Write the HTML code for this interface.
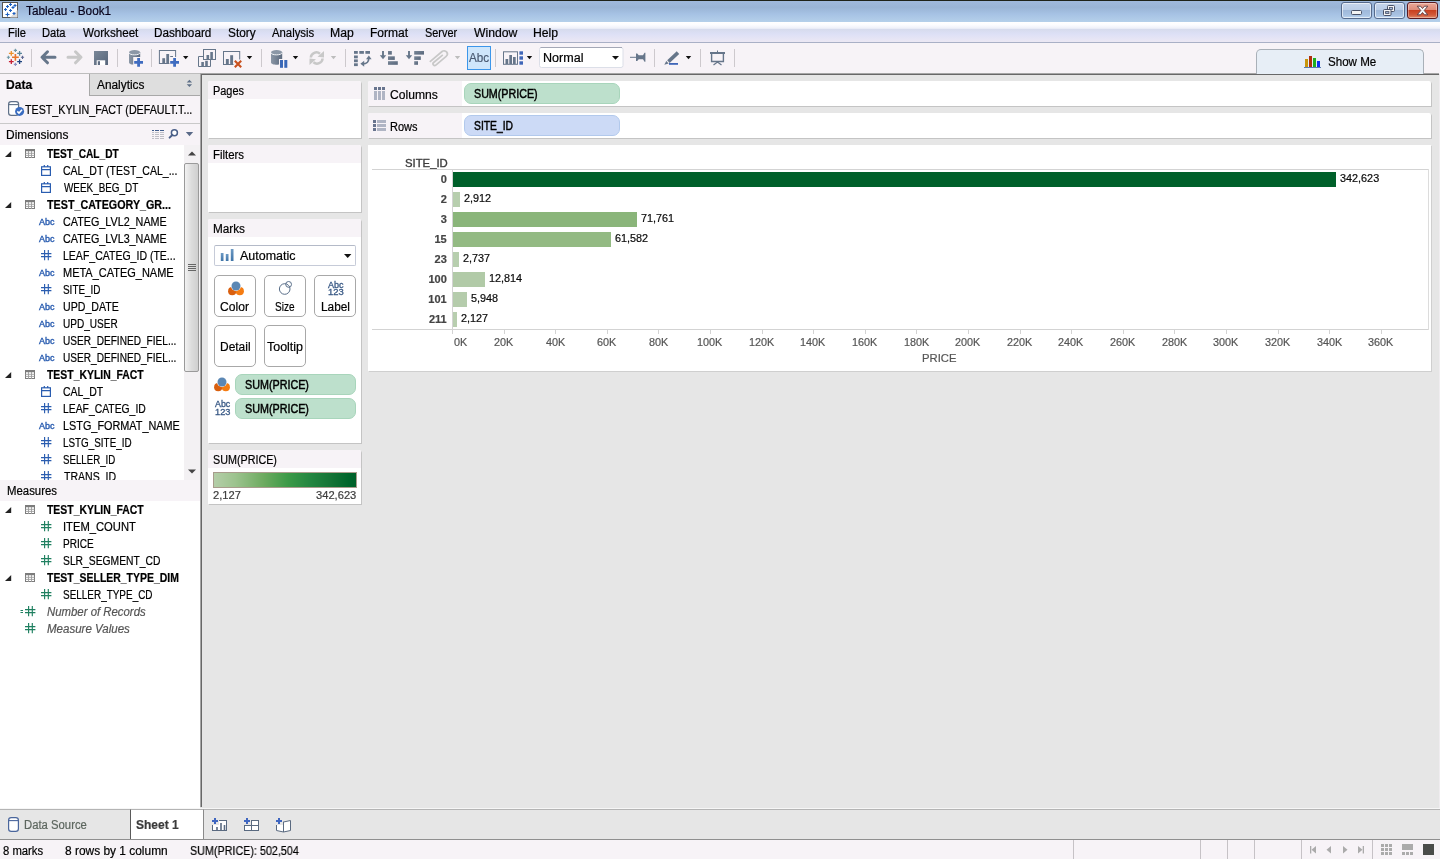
<!DOCTYPE html>
<html><head><meta charset="utf-8"><title>Tableau - Book1</title>
<style>
*{box-sizing:border-box;margin:0;padding:0}
html,body{width:1440px;height:859px;overflow:hidden;background:#e6e6e6}
body{position:relative;font-family:"Liberation Sans",sans-serif;font-size:12px;color:#000}
.a{position:absolute}
svg{position:absolute;overflow:visible}
.t{position:absolute;white-space:nowrap;transform-origin:0 0;-webkit-text-stroke:.2px}
#title{left:0;top:0;width:1440px;height:22px;background:linear-gradient(#9fb9dc 0,#99b4d5 30%,#a6c2e4 62%,#b5d0ea 100%);border-top:1px solid #1e2218}
#menu{left:0;top:22px;width:1440px;height:21px;background:linear-gradient(#fff 0,#fcfcff 14%,#eef0f9 32%,#d6dbed 35%,#dde0f6 60%,#e6e5f5 85%,#ece8f4 100%);border-bottom:1px solid #a9b0c6}
#tool{left:0;top:43px;width:1440px;height:31px;background:#f7f3f7}
.sep{position:absolute;width:1px;background:#cdc9cd;top:49px;height:18px}
.hdr{background:#f7f3f7}
.card{position:absolute;background:#fff;box-shadow:1px 1px 0 #c4c4c4;border-radius:2px 2px 0 0;overflow:hidden}
.card .h{position:absolute;left:0;top:0;right:0;background:#f7f3f7}
.pill{position:absolute;border-radius:7px;height:21px}
.g{background:#bde0cc;border:1px solid #a8d5bb}
.b{background:#ccdaf6;border:1px solid #b2c9ec}
.btn{position:absolute;width:42px;height:42px;border:1px solid #a8a8a8;border-radius:5px;background:#fff}
.bar{position:absolute;left:453px;height:15px}
.ln{position:absolute;background:#d3d3d3}
#root{position:absolute;left:0;top:0;width:1440px;height:859px;overflow:hidden;will-change:transform}
</style></head><body><div id="root">

<div id="title" class="a"></div>
<svg style="left:2px;top:2px" width="17" height="17" viewBox="0 0 17 17"><rect x=".5" y=".5" width="15" height="15" fill="#fff" stroke="#555"/><path d="M8 15.500L15.500 8V15.500Z" fill="#ddd"/>
<g stroke="#1c5fc0" stroke-width="1.100"><path d="M4 4.500h3M5.500 3v3"/><path d="M7 2.500h3M8.500 1v3"/><path d="M11.500 3.500h3M13 2v3"/><path d="M7 8.500h3M8.500 7v3"/><path d="M9.500 5.500h3M11 4v3"/><path d="M2 7.500h3M3.500 6v3"/><path d="M3.500 12.500h4M5.500 10.500v4"/><path d="M10.500 11.500h3M12 10v3"/></g></svg>
<div class="t" style="left:26.44px;top:2.84px;font-size:12px;line-height:16px;transform:scaleX(0.9817);color:#08041c;">Tableau - Book1</div>
<div class="a" style="left:1341px;top:2px;width:31px;height:17px;border:1px solid #566a8c;border-radius:3px;box-shadow:inset 0 0 0 1px rgba(255,255,255,.6);background:linear-gradient(#c6d6ec 0,#b9cce6 47%,#a0b9da 50%,#a8c2e2 80%,#bcd4f0 100%)"></div>
<div class="a" style="left:1351px;top:10px;width:11px;height:5px;background:#f4f4f4;border:1px solid #4a5268;border-radius:1.500px"></div>
<div class="a" style="left:1374px;top:2px;width:31px;height:17px;border:1px solid #566a8c;border-radius:3px;box-shadow:inset 0 0 0 1px rgba(255,255,255,.6);background:linear-gradient(#c6d6ec 0,#b9cce6 47%,#a0b9da 50%,#a8c2e2 80%,#bcd4f0 100%)"></div>
<svg style="left:1383px;top:5px" width="13" height="11" viewBox="0 0 13 11"><rect x="4.500" y=".5" width="7" height="6" rx="1" fill="#f4f4f4" stroke="#4a5268"/><rect x="6.500" y="2.500" width="3" height="2" fill="#a9c0e0" stroke="#4a5268" stroke-width=".8"/><rect x=".5" y="4.500" width="7.500" height="6" rx="1" fill="#f4f4f4" stroke="#4a5268"/><rect x="2.600" y="6.600" width="3.300" height="1.800" fill="#a9c0e0" stroke="#4a5268" stroke-width=".9"/></svg>
<div class="a" style="left:1407px;top:2px;width:31px;height:17px;border:1px solid #5a1a20;border-radius:3px;background:linear-gradient(#eaa898 0,#dd8a78 47%,#c9401f 50%,#d25a3a 80%,#e08a68 100%);box-shadow:inset 0 0 0 1px rgba(255,255,255,.35)"></div>
<svg style="left:1416px;top:5px" width="13" height="11" viewBox="0 0 13 11"><path d="M1.200 1.200h3.400l1.900 2.300 1.900-2.300h3.400l-3.600 4.300 3.600 4.300h-3.400l-1.900-2.300-1.900 2.300h-3.400l3.600-4.300z" fill="#f6f6f6" stroke="#5a3a40" stroke-width=".9" stroke-linejoin="round"/></svg>
<div id="menu" class="a"></div>
<div class="t" style="left:8.18px;top:24.84px;font-size:12px;line-height:16px;transform:scaleX(0.9316);">File</div>
<div class="t" style="left:42.39px;top:24.84px;font-size:12px;line-height:16px;transform:scaleX(0.9276);">Data</div>
<div class="t" style="left:83.05px;top:24.84px;font-size:12px;line-height:16px;transform:scaleX(0.9685);">Worksheet</div>
<div class="t" style="left:154.14px;top:24.84px;font-size:12px;line-height:16px;transform:scaleX(0.9763);">Dashboard</div>
<div class="t" style="left:227.76px;top:24.84px;font-size:12px;line-height:16px;transform:scaleX(0.9840);">Story</div>
<div class="t" style="left:271.78px;top:24.84px;font-size:12px;line-height:16px;transform:scaleX(0.9451);">Analysis</div>
<div class="t" style="left:330.40px;top:24.84px;font-size:12px;line-height:16px;transform:scaleX(1.0158);">Map</div>
<div class="t" style="left:370.11px;top:24.84px;font-size:12px;line-height:16px;transform:scaleX(1.0019);">Format</div>
<div class="t" style="left:425.11px;top:24.84px;font-size:12px;line-height:16px;transform:scaleX(0.9075);">Server</div>
<div class="t" style="left:473.55px;top:24.84px;font-size:12px;line-height:16px;transform:scaleX(1.0174);">Window</div>
<div class="t" style="left:533.00px;top:24.84px;font-size:12px;line-height:16px;transform:scaleX(1.0176);">Help</div>
<div id="tool" class="a"></div>
<div class="a" style="left:200px;top:73px;width:1239px;height:1px;background:#a6a6a6"></div><div class="a" style="left:201px;top:74px;width:1238px;height:1px;background:#686868"></div>
<div class="a" style="left:0;top:73px;width:200px;height:1px;background:#bdbdbd"></div>
<div class="sep" style="left:31px"></div>
<div class="sep" style="left:117px"></div>
<div class="sep" style="left:151px"></div>
<div class="sep" style="left:261px"></div>
<div class="sep" style="left:345px"></div>
<div class="sep" style="left:495px"></div>
<div class="sep" style="left:654px"></div>
<div class="sep" style="left:700px"></div>
<div class="sep" style="left:734px"></div>
<svg style="left:0;top:44px" width="760" height="30" viewBox="0 44 760 30"><defs><linearGradient id="ig" x1="0" y1="0" x2="1" y2="1"><stop offset="0" stop-color="#7a8798"/><stop offset="1" stop-color="#56657a"/></linearGradient><linearGradient id="cy" x1="0" y1="0" x2="1" y2="0"><stop offset="0" stop-color="#8b97a6"/><stop offset="1" stop-color="#5c6a7e"/></linearGradient></defs><path d="M12.0 57.3h6.8M15.4 53.9v6.8" stroke="#e8762c" stroke-width="1.6" fill="none"/><path d="M8.9 53.3h4.8M11.3 50.9v4.8" stroke="#eb912c" stroke-width="1.3" fill="none"/><path d="M17.200000000000003 53.3h4.8M19.6 50.9v4.8" stroke="#59879b" stroke-width="1.3" fill="none"/><path d="M8.9 61.7h4.8M11.3 59.300000000000004v4.8" stroke="#c72035" stroke-width="1.3" fill="none"/><path d="M17.200000000000003 61.7h4.8M19.6 59.300000000000004v4.8" stroke="#1f447e" stroke-width="1.3" fill="none"/><path d="M13.8 50.4h3.2M15.4 48.8v3.2" stroke="#7199a6" stroke-width="1.1" fill="none"/><path d="M13.8 64.4h3.2M15.4 62.800000000000004v3.2" stroke="#8c8fc0" stroke-width="1.1" fill="none"/><path d="M6.800000000000001 57.3h3.2M8.4 55.699999999999996v3.2" stroke="#7199a6" stroke-width="1.1" fill="none"/><path d="M20.9 57.3h3.2M22.5 55.699999999999996v3.2" stroke="#5c6691" stroke-width="1.1" fill="none"/><path d="M47.500 51.800L42 57.300l5.500 5.500M42.300 57.300H55" stroke="#66768a" stroke-width="3" fill="none" stroke-linecap="round" stroke-linejoin="round"/><path d="M75.500 51.800L81 57.300l-5.500 5.500M80.700 57.300H68" stroke="#c8c8c8" stroke-width="3" fill="none" stroke-linecap="round" stroke-linejoin="round"/><rect x="94" y="51" width="14" height="14" fill="url(#ig)"/><rect x="96.700" y="60.300" width="8.500" height="4.700" fill="#fff"/><rect x="97.800" y="61.200" width="2.200" height="3.800" fill="#5f6d82"/><path d="M129 52.2v10.4c0 3 11.2 3 11.2 0v-10.4z" fill="url(#cy)"/><ellipse cx="134.6" cy="52.3" rx="5.6" ry="2.300" fill="#8b97a6"/><path d="M129 52.6c0 3 11.2 3 11.2 0" stroke="#fff" stroke-width=".9" fill="none"/><rect x="133.200" y="57" width="10.800" height="10.800" fill="#f7f3f7"/><path d="M134.2 62.4h8.800M138.6 58.0v8.800" stroke="#3f6cc0" stroke-width="2.800" fill="none"/><rect x="159.400" y="50.500" width="16.200" height="13" fill="none" stroke="#66768a"/><rect x="162.300" y="58.200" width="2.800" height="5" fill="#66768a"/><rect x="166.300" y="54" width="2.800" height="9.200" fill="#66768a"/><rect x="170.200" y="56" width="2.800" height="3" fill="#66768a"/><rect x="169.400" y="57" width="10.600" height="10.600" fill="#f7f3f7"/><path d="M170.2 62.4h8.800M174.6 58.0v8.800" stroke="#3f6cc0" stroke-width="2.800" fill="none"/><path d="M183 56h5.400l-2.700 3.200z" fill="#111"/><rect x="203.500" y="49.500" width="12" height="10" fill="#f7f3f7" stroke="#66768a"/><rect x="206.500" y="55" width="2.600" height="4" fill="#66768a"/><rect x="210.300" y="52" width="2.600" height="7" fill="#66768a"/><path d="M203 56.500h-4.500v10h12v-6.500" fill="none" stroke="#66768a"/><rect x="201.300" y="62" width="2.600" height="4" fill="#66768a"/><rect x="205.200" y="60.800" width="2.600" height="5.200" fill="#66768a"/><rect x="223.500" y="51.500" width="16.200" height="13" fill="none" stroke="#66768a"/><rect x="225.900" y="59" width="2.900" height="5" fill="#66768a"/><rect x="230.200" y="55.200" width="2.900" height="8.800" fill="#66768a"/><rect x="233.500" y="59.500" width="9" height="9" fill="#f7f3f7"/><path d="M234.800 60.800l6.400 6.400M241.200 60.800l-6.400 6.400" stroke="#c8501e" stroke-width="2.100" fill="none"/><path d="M246.8 56h5.400l-2.700 3.200z" fill="#111"/><path d="M271 52.2v10.4c0 3 11.2 3 11.2 0v-10.4z" fill="url(#cy)"/><ellipse cx="276.6" cy="52.3" rx="5.6" ry="2.300" fill="#8b97a6"/><path d="M271 52.6c0 3 11.2 3 11.2 0" stroke="#fff" stroke-width=".9" fill="none"/><rect x="279" y="59" width="9" height="9" fill="#f7f3f7"/><rect x="280" y="60" width="3" height="7.800" fill="#3a68b8"/><rect x="284.300" y="60" width="3" height="7.800" fill="#3a68b8"/><path d="M292.8 56h5.400l-2.700 3.200z" fill="#111"/><path d="M310.800 57.500a5.600 5.600 0 0 1 9.200-3.800" stroke="#c8c8c8" stroke-width="2.500" fill="none"/><path d="M317.500 56.800l6.500-5.800 0 6.600z" fill="#c8c8c8"/><path d="M322.600 58.500a5.600 5.600 0 0 1-9.200 3.800" stroke="#c8c8c8" stroke-width="2.500" fill="none"/><path d="M316 59.200l-6.500 5.800 0-6.600z" fill="#c8c8c8"/><path d="M330.8 56h5.400l-2.700 3.200z" fill="#bdbdbd"/><rect x="354" y="51" width="3.8" height="2.800" fill="#66768a"/><rect x="359.3" y="51" width="4.6" height="2.800" fill="#66768a"/><rect x="365.4" y="51" width="4.6" height="2.800" fill="#66768a"/><rect x="354" y="55.5" width="3.800" height="2.800" fill="#66768a"/><rect x="354" y="59.4" width="3.800" height="2.800" fill="#66768a"/><rect x="354" y="63.3" width="3.800" height="2.800" fill="#66768a"/><path d="M362.500 63.800c5 0 6.300-2 6.300-6" stroke="#66768a" stroke-width="1.700" fill="none"/><path d="M366 59.200l2.800-3.600 2.800 3.600z" fill="#66768a"/><path d="M364.200 60.800l-3.800 3 3.800 3z" fill="#66768a"/><path d="M383 51v5.500" stroke="#66768a" stroke-width="1.900" fill="none"/><path d="M379.8 55.200h6.400l-3.200 4z" fill="#66768a"/><rect x="388" y="51" width="3.8" height="3.600" fill="url(#ig)"/><rect x="388" y="56.3" width="6.8" height="3.600" fill="url(#ig)"/><rect x="388" y="61.2" width="9.8" height="3.600" fill="url(#ig)"/><path d="M409 51v5.500" stroke="#66768a" stroke-width="1.900" fill="none"/><path d="M405.8 55.200h6.400l-3.200 4z" fill="#66768a"/><rect x="414.200" y="51" width="9.8" height="3.600" fill="url(#ig)"/><rect x="414.200" y="56.3" width="6.6" height="3.600" fill="url(#ig)"/><rect x="414.200" y="61.2" width="3.8" height="3.600" fill="url(#ig)"/><g transform="rotate(-40 439 58)" fill="none" stroke="#c8c8c8" stroke-width="1.700"><path d="M429.500 55h16a3.200 3.200 0 0 1 0 6.400h-13.500a1.700 1.700 0 0 1 0-3.400h12"/></g><path d="M454.8 56h5.400l-2.700 3.200z" fill="#bdbdbd"/><rect x="467.500" y="46.500" width="23" height="23" fill="#cfe6fb" stroke="#3c96ea"/><rect x="503.500" y="51.800" width="14" height="12.500" fill="none" stroke="#66768a"/><rect x="505.500" y="59" width="2.700" height="5" fill="#66768a"/><rect x="509.300" y="55" width="2.700" height="9" fill="#66768a"/><rect x="513" y="57" width="2.700" height="7" fill="#66768a"/><rect x="519.400" y="51.3" width="3.600" height="3.400" fill="#3f66b8"/><rect x="519.400" y="56.3" width="3.600" height="3.400" fill="#3f66b8"/><rect x="519.400" y="61.3" width="3.600" height="3.400" fill="#3f66b8"/><path d="M526.8 56h5.400l-2.700 3.200z" fill="#111"/><rect x="539.500" y="47.500" width="83.500" height="20" rx="2" fill="#fff" stroke="#dcdfe8"/><path d="M540.500 47.500h81.500" stroke="#a4a8b6" fill="none"/><path d="M612 56h7l-3.500 3.800z" fill="#111"/><path d="M630 57.300h7" stroke="#66768a" stroke-width="1" fill="none"/><path d="M636 53.500l1.200 0 1.500 1.800h4.300l1.500-2.500h.9v9h-.9l-1.500-2.500h-4.300l-1.500 1.800h-1.200z" fill="#66768a"/><path d="M667.200 60.300l9.500-9 2.500 2.600-9.600 9z" fill="#66768a"/><path d="M664.300 64.700l2-3.700 2.400 2.500z" fill="#66768a"/><rect x="669" y="63" width="9" height="1.800" fill="#3f66b8"/><path d="M685.8 56h5.400l-2.700 3.200z" fill="#111"/><rect x="710" y="52" width="15" height="2" fill="#66768a"/><path d="M717.500 50.500v2" stroke="#66768a"/><path d="M711.600 54v7.500h11.800V54" fill="none" stroke="#66768a" stroke-width="1.400"/><path d="M717.500 62l-4 3M717.500 62l4 3" stroke="#66768a" stroke-width="1.200" fill="none"/></svg>
<div class="t" style="left:469.18px;top:49.84px;font-size:12px;line-height:16px;transform:scaleX(0.9736);color:#4a5a72;">Abc</div>
<div class="t" style="left:542.72px;top:49.84px;font-size:12px;line-height:16px;transform:scaleX(1.0451);">Normal</div>
<div class="a" style="left:1256px;top:49px;width:168px;height:25px;border:1px solid #a9b0b8;border-bottom:none;border-radius:5px 5px 0 0;background:#e7eef6"></div>
<svg style="left:1304px;top:55px" width="18" height="13" viewBox="0 0 18 13"><rect x="1" y="4" width="3" height="8" fill="#c8960c"/><rect x="5" y="1" width="3" height="11" fill="#b0300c"/><rect x="9" y="3" width="3" height="9" fill="#1fae1f"/><rect x="13" y="6" width="3" height="6" fill="#1030f0"/><rect x="0" y="12" width="17" height="1" fill="#5a7ab0"/></svg>
<div class="t" style="left:1328.37px;top:53.84px;font-size:12px;line-height:16px;transform:scaleX(0.9644);">Show Me</div>
<div class="a" style="left:0;top:74px;width:200px;height:734px;background:#fff"></div>
<div class="a" style="left:200px;top:74px;width:1px;height:733px;background:#a6a6a6"></div><div class="a" style="left:201px;top:74px;width:1px;height:733px;background:#686868"></div><div class="a" style="left:1439px;top:75px;width:1px;height:733px;background:#f0edf0"></div>
<div class="a hdr" style="left:0;top:74px;width:200px;height:50px"></div>
<div class="a" style="left:89px;top:74px;width:111px;height:22px;background:#dedede;border-left:1px solid #a8a8a8;border-bottom:1px solid #a8a8a8"></div>
<div class="t" style="left:5.79px;top:76.84px;font-size:12px;line-height:16px;transform:scaleX(1.0046);font-weight:bold;">Data</div>
<div class="t" style="left:97.38px;top:76.84px;font-size:12px;line-height:16px;transform:scaleX(0.9882);">Analytics</div>
<svg style="left:186px;top:79px" width="7" height="9" viewBox="0 0 7 9"><path d="M.7 3.600L3.400 0.800L6.100 3.600zM.7 5.200L3.400 8L6.100 5.200z" fill="#5f7088"/></svg>
<svg style="left:7px;top:100px" width="18" height="17" viewBox="7 100 18 17"><rect x="8.600" y="101.600" width="10" height="13.800" rx="2.600" fill="#fff" stroke="#5f7088" stroke-width="1.200"/><path d="M9 104.600h9.200" fill="none" stroke="#5f7088" stroke-width="1.100"/><circle cx="19.600" cy="111.400" r="4.500" fill="#3a6cc0"/><path d="M17.300 111.400l1.700 1.700 3-3.400" fill="none" stroke="#fff" stroke-width="1.500"/></svg>
<div class="t" style="left:24.96px;top:101.84px;font-size:12px;line-height:16px;transform:scaleX(0.8919);">TEST_KYLIN_FACT (DEFAULT.T...</div>
<div class="a" style="left:0;top:123px;width:200px;height:1px;background:#c9c9c9"></div>
<div class="a hdr" style="left:0;top:124px;width:200px;height:21px"></div>
<div class="t" style="left:6.32px;top:126.84px;font-size:12px;line-height:16px;transform:scaleX(0.9956);">Dimensions</div>
<svg style="left:152px;top:130px" width="12" height="9" viewBox="0 0 12 9" shape-rendering="crispEdges"><g fill="#3f5c8c"><rect x="0" y="0" width="2" height="1"/><rect x="3" y="0" width="4" height="1"/><rect x="8" y="0" width="4" height="1"/></g><g fill="#bfbfc6"><rect x="0" y="2" width="2" height="1"/><rect x="3" y="2" width="4" height="1"/><rect x="8" y="2" width="4" height="1"/><rect x="0" y="4" width="2" height="1"/><rect x="3" y="4" width="4" height="1"/><rect x="8" y="4" width="4" height="1"/><rect x="0" y="6" width="2" height="1"/><rect x="3" y="6" width="4" height="1"/><rect x="8" y="6" width="4" height="1"/><rect x="0" y="8" width="2" height="1"/><rect x="3" y="8" width="4" height="1"/><rect x="8" y="8" width="4" height="1"/></g></svg>
<svg style="left:168px;top:128px" width="11" height="11" viewBox="168 128 11 11"><circle cx="174.400" cy="132.800" r="3" fill="#fff" stroke="#4a5f88" stroke-width="1.500"/><path d="M172.300 135L169.600 137.600" stroke="#4a5f88" stroke-width="2" stroke-linecap="round"/></svg>
<svg style="left:185px;top:132px" width="9" height="5" viewBox="0 0 9 5"><path d="M.8 0h7.400L4.500 4.200z" fill="#5a6a88"/></svg>
<div class="a" style="left:0;top:145px;width:184px;height:335px;overflow:hidden">
<svg style="left:5px;top:6px" width="7" height="7" viewBox="0 0 7 7"><path d="M6.200 0v6H0z" fill="#222"/></svg><svg style="left:25px;top:4px" width="10" height="9" viewBox="0 0 10 9"><rect x=".5" y=".5" width="9" height="8" fill="#fff" stroke="#7c7c7c"/><path d="M0 1.500h10" stroke="#7c7c7c" stroke-width="1.500"/><path d="M.5 4.300h9M.5 6.400h9M3.500 2v7M6.500 2v7" stroke="#9c9c9c" stroke-width=".9"/></svg>
<div class="t" style="left:46.99px;top:0.84px;font-size:12px;line-height:16px;transform:scaleX(0.8471);font-weight:bold;">TEST_CAL_DT</div>
<svg style="left:41px;top:20px" width="11" height="12" viewBox="0 0 11 12"><rect x=".6" y="1.800" width="8.800" height="8.600" fill="#fff" stroke="#2a5db0" stroke-width="1.200"/><path d="M.6 4.700h8.800M3.300 0v2M6.700 0v2" stroke="#2a5db0" stroke-width="1.200" fill="none"/></svg>
<div class="t" style="left:63.27px;top:17.84px;font-size:12px;line-height:16px;transform:scaleX(0.8767);">CAL_DT (TEST_CAL_...</div>
<svg style="left:41px;top:37px" width="11" height="12" viewBox="0 0 11 12"><rect x=".6" y="1.800" width="8.800" height="8.600" fill="#fff" stroke="#2a5db0" stroke-width="1.200"/><path d="M.6 4.700h8.800M3.300 0v2M6.700 0v2" stroke="#2a5db0" stroke-width="1.200" fill="none"/></svg>
<div class="t" style="left:63.76px;top:34.84px;font-size:12px;line-height:16px;transform:scaleX(0.8250);">WEEK_BEG_DT</div>
<svg style="left:5px;top:57px" width="7" height="7" viewBox="0 0 7 7"><path d="M6.200 0v6H0z" fill="#222"/></svg><svg style="left:25px;top:55px" width="10" height="9" viewBox="0 0 10 9"><rect x=".5" y=".5" width="9" height="8" fill="#fff" stroke="#7c7c7c"/><path d="M0 1.500h10" stroke="#7c7c7c" stroke-width="1.500"/><path d="M.5 4.300h9M.5 6.400h9M3.500 2v7M6.500 2v7" stroke="#9c9c9c" stroke-width=".9"/></svg>
<div class="t" style="left:46.98px;top:51.84px;font-size:12px;line-height:16px;transform:scaleX(0.8945);font-weight:bold;">TEST_CATEGORY_GR...</div>
<div class="t" style="left:38.88px;top:69.96px;font-size:9.5px;line-height:13.5px;transform:scaleX(0.9503);color:#2a5db0;-webkit-text-stroke:.4px #2a5db0;">Abc</div>
<div class="t" style="left:63.25px;top:68.84px;font-size:12px;line-height:16px;transform:scaleX(0.8971);">CATEG_LVL2_NAME</div>
<div class="t" style="left:38.88px;top:86.96px;font-size:9.5px;line-height:13.5px;transform:scaleX(0.9503);color:#2a5db0;-webkit-text-stroke:.4px #2a5db0;">Abc</div>
<div class="t" style="left:63.25px;top:85.84px;font-size:12px;line-height:16px;transform:scaleX(0.8971);">CATEG_LVL3_NAME</div>
<svg style="left:40.8px;top:105px" width="11" height="11" viewBox="0 0 11 11"><path d="M3.600 0v10.200M7.300 0v10.200M0 3.600h10.400M0 6.600h10.400" stroke="#2a5db0" stroke-width="1.150" fill="none"/></svg>
<div class="t" style="left:62.94px;top:102.84px;font-size:12px;line-height:16px;transform:scaleX(0.8766);">LEAF_CATEG_ID (TE...</div>
<div class="t" style="left:38.88px;top:120.96px;font-size:9.5px;line-height:13.5px;transform:scaleX(0.9503);color:#2a5db0;-webkit-text-stroke:.4px #2a5db0;">Abc</div>
<div class="t" style="left:62.90px;top:119.84px;font-size:12px;line-height:16px;transform:scaleX(0.9153);">META_CATEG_NAME</div>
<svg style="left:40.8px;top:139px" width="11" height="11" viewBox="0 0 11 11"><path d="M3.600 0v10.200M7.300 0v10.200M0 3.600h10.400M0 6.600h10.400" stroke="#2a5db0" stroke-width="1.150" fill="none"/></svg>
<div class="t" style="left:63.35px;top:136.84px;font-size:12px;line-height:16px;transform:scaleX(0.8276);">SITE_ID</div>
<div class="t" style="left:38.88px;top:154.96px;font-size:9.5px;line-height:13.5px;transform:scaleX(0.9503);color:#2a5db0;-webkit-text-stroke:.4px #2a5db0;">Abc</div>
<div class="t" style="left:62.98px;top:153.84px;font-size:12px;line-height:16px;transform:scaleX(0.8836);">UPD_DATE</div>
<div class="t" style="left:38.88px;top:171.96px;font-size:9.5px;line-height:13.5px;transform:scaleX(0.9503);color:#2a5db0;-webkit-text-stroke:.4px #2a5db0;">Abc</div>
<div class="t" style="left:63.02px;top:170.84px;font-size:12px;line-height:16px;transform:scaleX(0.8377);">UPD_USER</div>
<div class="t" style="left:38.88px;top:188.96px;font-size:9.5px;line-height:13.5px;transform:scaleX(0.9503);color:#2a5db0;-webkit-text-stroke:.4px #2a5db0;">Abc</div>
<div class="t" style="left:63.02px;top:187.84px;font-size:12px;line-height:16px;transform:scaleX(0.8411);">USER_DEFINED_FIEL...</div>
<div class="t" style="left:38.88px;top:205.96px;font-size:9.5px;line-height:13.5px;transform:scaleX(0.9503);color:#2a5db0;-webkit-text-stroke:.4px #2a5db0;">Abc</div>
<div class="t" style="left:63.02px;top:204.84px;font-size:12px;line-height:16px;transform:scaleX(0.8411);">USER_DEFINED_FIEL...</div>
<svg style="left:5px;top:227px" width="7" height="7" viewBox="0 0 7 7"><path d="M6.200 0v6H0z" fill="#222"/></svg><svg style="left:25px;top:225px" width="10" height="9" viewBox="0 0 10 9"><rect x=".5" y=".5" width="9" height="8" fill="#fff" stroke="#7c7c7c"/><path d="M0 1.500h10" stroke="#7c7c7c" stroke-width="1.500"/><path d="M.5 4.300h9M.5 6.400h9M3.500 2v7M6.500 2v7" stroke="#9c9c9c" stroke-width=".9"/></svg>
<div class="t" style="left:46.98px;top:221.84px;font-size:12px;line-height:16px;transform:scaleX(0.8687);font-weight:bold;">TEST_KYLIN_FACT</div>
<svg style="left:41px;top:241px" width="11" height="12" viewBox="0 0 11 12"><rect x=".6" y="1.800" width="8.800" height="8.600" fill="#fff" stroke="#2a5db0" stroke-width="1.200"/><path d="M.6 4.700h8.800M3.300 0v2M6.700 0v2" stroke="#2a5db0" stroke-width="1.200" fill="none"/></svg>
<div class="t" style="left:63.27px;top:238.84px;font-size:12px;line-height:16px;transform:scaleX(0.8731);">CAL_DT</div>
<svg style="left:40.8px;top:258px" width="11" height="11" viewBox="0 0 11 11"><path d="M3.600 0v10.200M7.300 0v10.200M0 3.600h10.400M0 6.600h10.400" stroke="#2a5db0" stroke-width="1.150" fill="none"/></svg>
<div class="t" style="left:62.95px;top:255.84px;font-size:12px;line-height:16px;transform:scaleX(0.8637);">LEAF_CATEG_ID</div>
<div class="t" style="left:38.88px;top:273.96px;font-size:9.5px;line-height:13.5px;transform:scaleX(0.9503);color:#2a5db0;-webkit-text-stroke:.4px #2a5db0;">Abc</div>
<div class="t" style="left:62.91px;top:272.84px;font-size:12px;line-height:16px;transform:scaleX(0.9050);">LSTG_FORMAT_NAME</div>
<svg style="left:40.8px;top:292px" width="11" height="11" viewBox="0 0 11 11"><path d="M3.600 0v10.200M7.300 0v10.200M0 3.600h10.400M0 6.600h10.400" stroke="#2a5db0" stroke-width="1.150" fill="none"/></svg>
<div class="t" style="left:62.99px;top:289.84px;font-size:12px;line-height:16px;transform:scaleX(0.8227);">LSTG_SITE_ID</div>
<svg style="left:40.8px;top:309px" width="11" height="11" viewBox="0 0 11 11"><path d="M3.600 0v10.200M7.300 0v10.200M0 3.600h10.400M0 6.600h10.400" stroke="#2a5db0" stroke-width="1.150" fill="none"/></svg>
<div class="t" style="left:63.36px;top:306.84px;font-size:12px;line-height:16px;transform:scaleX(0.8084);">SELLER_ID</div>
<svg style="left:40.8px;top:326px" width="11" height="11" viewBox="0 0 11 11"><path d="M3.600 0v10.200M7.300 0v10.200M0 3.600h10.400M0 6.600h10.400" stroke="#2a5db0" stroke-width="1.150" fill="none"/></svg>
<div class="t" style="left:63.56px;top:323.84px;font-size:12px;line-height:16px;transform:scaleX(0.8786);">TRANS_ID</div>
</div>
<div class="a" style="left:184px;top:145px;width:16px;height:335px;background:#f3f1f3"></div>
<svg style="left:188px;top:151px" width="8" height="5" viewBox="0 0 8 5"><path d="M0 4.500L4 .5L8 4.500z" fill="#444"/></svg>
<svg style="left:188px;top:469px" width="8" height="5" viewBox="0 0 8 5"><path d="M0 .5L4 4.500L8 .5z" fill="#444"/></svg>
<div class="a" style="left:184px;top:163px;width:15px;height:209px;border:1px solid #9a9a9a;border-radius:2px;background:linear-gradient(90deg,#f2f2f2,#dcdcdc 50%,#cfcfcf)"></div>
<div class="a" style="left:188px;top:264px;width:8px;height:1px;background:#666;box-shadow:0 2px 0 #666,0 4px 0 #666,0 6px 0 #666"></div>
<div class="a hdr" style="left:0;top:480px;width:200px;height:21px"></div>
<div class="t" style="left:6.67px;top:482.84px;font-size:12px;line-height:16px;transform:scaleX(0.9489);">Measures</div>
<div class="a" style="left:0;top:501px;width:200px;height:200px;overflow:hidden">
<svg style="left:5px;top:6px" width="7" height="7" viewBox="0 0 7 7"><path d="M6.200 0v6H0z" fill="#222"/></svg><svg style="left:25px;top:4px" width="10" height="9" viewBox="0 0 10 9"><rect x=".5" y=".5" width="9" height="8" fill="#fff" stroke="#7c7c7c"/><path d="M0 1.500h10" stroke="#7c7c7c" stroke-width="1.500"/><path d="M.5 4.300h9M.5 6.400h9M3.500 2v7M6.500 2v7" stroke="#9c9c9c" stroke-width=".9"/></svg>
<div class="t" style="left:46.98px;top:0.84px;font-size:12px;line-height:16px;transform:scaleX(0.8687);font-weight:bold;">TEST_KYLIN_FACT</div>
<svg style="left:40.8px;top:20px" width="11" height="11" viewBox="0 0 11 11"><path d="M3.600 0v10.200M7.300 0v10.200M0 3.600h10.400M0 6.600h10.400" stroke="#1f8060" stroke-width="1.150" fill="none"/></svg>
<div class="t" style="left:62.77px;top:17.84px;font-size:12px;line-height:16px;transform:scaleX(0.9345);">ITEM_COUNT</div>
<svg style="left:40.8px;top:37px" width="11" height="11" viewBox="0 0 11 11"><path d="M3.600 0v10.200M7.300 0v10.200M0 3.600h10.400M0 6.600h10.400" stroke="#1f8060" stroke-width="1.150" fill="none"/></svg>
<div class="t" style="left:62.98px;top:34.84px;font-size:12px;line-height:16px;transform:scaleX(0.8358);">PRICE</div>
<svg style="left:40.8px;top:54px" width="11" height="11" viewBox="0 0 11 11"><path d="M3.600 0v10.200M7.300 0v10.200M0 3.600h10.400M0 6.600h10.400" stroke="#1f8060" stroke-width="1.150" fill="none"/></svg>
<div class="t" style="left:63.33px;top:51.84px;font-size:12px;line-height:16px;transform:scaleX(0.8597);">SLR_SEGMENT_CD</div>
<svg style="left:5px;top:74px" width="7" height="7" viewBox="0 0 7 7"><path d="M6.200 0v6H0z" fill="#222"/></svg><svg style="left:25px;top:72px" width="10" height="9" viewBox="0 0 10 9"><rect x=".5" y=".5" width="9" height="8" fill="#fff" stroke="#7c7c7c"/><path d="M0 1.500h10" stroke="#7c7c7c" stroke-width="1.500"/><path d="M.5 4.300h9M.5 6.400h9M3.500 2v7M6.500 2v7" stroke="#9c9c9c" stroke-width=".9"/></svg>
<div class="t" style="left:46.98px;top:68.84px;font-size:12px;line-height:16px;transform:scaleX(0.8715);font-weight:bold;">TEST_SELLER_TYPE_DIM</div>
<svg style="left:40.8px;top:88px" width="11" height="11" viewBox="0 0 11 11"><path d="M3.600 0v10.200M7.300 0v10.200M0 3.600h10.400M0 6.600h10.400" stroke="#1f8060" stroke-width="1.150" fill="none"/></svg>
<div class="t" style="left:63.35px;top:85.84px;font-size:12px;line-height:16px;transform:scaleX(0.8286);">SELLER_TYPE_CD</div>
<svg style="left:24.5px;top:105px" width="11" height="11" viewBox="0 0 11 11"><path d="M3.600 0v10.200M7.300 0v10.200M0 3.600h10.400M0 6.600h10.400" stroke="#1f8060" stroke-width="1.150" fill="none"/></svg><svg style="left:20px;top:105px" width="4" height="11" viewBox="0 0 4 11"><path d="M.5 4.500h2.500M.5 6.500h2.500" stroke="#1f8060" stroke-width="1" fill="none"/></svg>
<div class="t" style="left:46.75px;top:102.84px;font-size:12px;line-height:16px;transform:scaleX(0.9485);font-style:italic;color:#555;">Number of Records</div>
<svg style="left:24.5px;top:122px" width="11" height="11" viewBox="0 0 11 11"><path d="M3.600 0v10.200M7.300 0v10.200M0 3.600h10.400M0 6.600h10.400" stroke="#1f8060" stroke-width="1.150" fill="none"/></svg>
<div class="t" style="left:46.75px;top:119.84px;font-size:12px;line-height:16px;transform:scaleX(0.9597);font-style:italic;color:#555;">Measure Values</div>
</div>
<div class="card" style="left:208px;top:81px;width:153px;height:57px"><div class="h" style="height:18px"></div></div>
<div class="t" style="left:212.70px;top:82.84px;font-size:12px;line-height:16px;transform:scaleX(0.9108);">Pages</div>
<div class="card" style="left:208px;top:145px;width:153px;height:67px"><div class="h" style="height:18px"></div></div>
<div class="t" style="left:212.66px;top:146.84px;font-size:12px;line-height:16px;transform:scaleX(0.9505);">Filters</div>
<div class="card" style="left:208px;top:219px;width:153px;height:224px"><div class="h" style="height:18px"></div></div>
<div class="t" style="left:212.64px;top:220.84px;font-size:12px;line-height:16px;transform:scaleX(0.9793);">Marks</div>
<div class="card" style="left:208px;top:450px;width:153px;height:54px"><div class="h" style="height:18px"></div></div>
<div class="t" style="left:213.11px;top:451.84px;font-size:12px;line-height:16px;transform:scaleX(0.8966);">SUM(PRICE)</div>
<div class="a" style="left:214px;top:245px;width:142px;height:21px;border:1px solid #c6cbd8;border-top-color:#b4bac8;border-radius:2px;background:#fff"></div>
<svg style="left:220px;top:249px" width="14" height="12" viewBox="0 0 14 12"><defs><linearGradient id="bg" x1="0" y1="0" x2="0" y2="1"><stop offset="0" stop-color="#6d9ac4"/><stop offset="1" stop-color="#3f74a8"/></linearGradient></defs><rect x=".8" y="4" width="2.700" height="8" fill="url(#bg)"/><rect x="5.800" y="5" width="2.700" height="7" fill="url(#bg)"/><rect x="10.800" y="0" width="2.700" height="12" fill="url(#bg)"/></svg>
<div class="t" style="left:240.28px;top:247.84px;font-size:12px;line-height:16px;transform:scaleX(1.0393);">Automatic</div>
<svg style="left:344px;top:254px" width="8" height="4" viewBox="0 0 8 4"><path d="M0 0h7.400L3.700 4z" fill="#111"/></svg>
<div class="btn" style="left:214px;top:275px"></div>
<div class="btn" style="left:264px;top:275px"></div>
<div class="btn" style="left:314px;top:275px"></div>
<div class="btn" style="left:214px;top:325px"></div>
<div class="btn" style="left:264px;top:325px"></div>
<div class="t" style="left:220.19px;top:298.84px;font-size:12px;line-height:16px;transform:scaleX(1.0084);">Color</div>
<div class="t" style="left:275.24px;top:298.84px;font-size:12px;line-height:16px;transform:scaleX(0.8354);">Size</div>
<div class="t" style="left:320.53px;top:298.84px;font-size:12px;line-height:16px;transform:scaleX(0.9864);">Label</div>
<div class="t" style="left:219.52px;top:338.84px;font-size:12px;line-height:16px;transform:scaleX(0.9968);">Detail</div>
<div class="t" style="left:266.82px;top:338.84px;font-size:12px;line-height:16px;transform:scaleX(1.0379);">Tooltip</div>
<svg style="left:226.5px;top:279.8px" width="18" height="16" viewBox="-9 -6 18 16"><circle cx="-3.800" cy="5.200" r="4.100" fill="#d95f0e"/><circle cx="3.800" cy="5.200" r="4.100" fill="#f57c12"/><circle cx="0" cy="0" r="5" fill="#fff"/><circle cx="0" cy="0" r="4.500" fill="#5b87b4"/></svg>
<svg style="left:277px;top:279px" width="16" height="16" viewBox="277 279 16 16"><circle cx="284.700" cy="289" r="5.300" fill="none" stroke="#5a6f8a" stroke-width="1"/><circle cx="288.600" cy="284.400" r="2.900" fill="none" stroke="#5a6f8a" stroke-width="1"/></svg>
<div class="t" style="left:327.78px;top:278.80px;font-size:8.5px;line-height:12.5px;transform:scaleX(1.0621);color:#3a5a86;-webkit-text-stroke:.3px #3a5a86;">Abc</div>
<div class="t" style="left:327.78px;top:286.40px;font-size:8.5px;line-height:12.5px;transform:scaleX(1.1093);color:#3a5a86;-webkit-text-stroke:.3px #3a5a86;">123</div>
<svg style="left:213.4px;top:375.7px" width="18" height="16" viewBox="-9 -6 18 16"><circle cx="-3.800" cy="5.200" r="4.100" fill="#d95f0e"/><circle cx="3.800" cy="5.200" r="4.100" fill="#f57c12"/><circle cx="0" cy="0" r="5" fill="#fff"/><circle cx="0" cy="0" r="4.500" fill="#5b87b4"/></svg>
<div class="pill g" style="left:235px;top:374px;width:121px"></div>
<div class="t" style="left:244.61px;top:376.84px;font-size:12px;line-height:16px;transform:scaleX(0.8966);-webkit-text-stroke:.45px #000;">SUM(PRICE)</div>
<div class="t" style="left:214.98px;top:398.40px;font-size:8.5px;line-height:12.5px;transform:scaleX(1.0412);color:#3a5a86;-webkit-text-stroke:.3px #3a5a86;">Abc</div>
<div class="t" style="left:215.00px;top:406.20px;font-size:8.5px;line-height:12.5px;transform:scaleX(1.0866);color:#3a5a86;-webkit-text-stroke:.3px #3a5a86;">123</div>
<div class="pill g" style="left:235px;top:398px;width:121px"></div>
<div class="t" style="left:244.61px;top:400.84px;font-size:12px;line-height:16px;transform:scaleX(0.8966);-webkit-text-stroke:.45px #000;">SUM(PRICE)</div>
<div class="a" style="left:213px;top:472px;width:144px;height:16px;border:1px solid #a89c8c;background:linear-gradient(90deg,#b4cea8 0,#9cc38e 15%,#6dab60 35%,#3c9a47 52%,#238640 68%,#157436 82%,#00652b 95%,#00602a 100%)"></div>
<div class="t" style="left:212.64px;top:487.69px;font-size:11px;line-height:15px;transform:scaleX(1.0144);color:#3c3c3c;-webkit-text-stroke:.2px #3c3c3c;">2,127</div>
<div class="t" style="left:316.38px;top:487.69px;font-size:11px;line-height:15px;transform:scaleX(1.0139);color:#3c3c3c;-webkit-text-stroke:.2px #3c3c3c;">342,623</div>
<div class="card" style="left:368px;top:81px;width:1063px;height:25px"><div class="h" style="height:25px;width:94px;right:auto"></div></div>
<div class="t" style="left:390.19px;top:86.84px;font-size:12px;line-height:16px;transform:scaleX(1.0085);">Columns</div>
<div class="pill g" style="left:464px;top:83px;width:156px"></div>
<div class="t" style="left:473.71px;top:85.84px;font-size:12px;line-height:16px;transform:scaleX(0.8923);-webkit-text-stroke:.45px #000;">SUM(PRICE)</div>
<div class="card" style="left:368px;top:113px;width:1063px;height:25px"><div class="h" style="height:25px;width:94px;right:auto"></div></div>
<div class="t" style="left:389.90px;top:118.84px;font-size:12px;line-height:16px;transform:scaleX(0.9165);">Rows</div>
<div class="pill b" style="left:464px;top:115px;width:156px"></div>
<div class="t" style="left:473.73px;top:117.84px;font-size:12px;line-height:16px;transform:scaleX(0.8592);-webkit-text-stroke:.45px #000;">SITE_ID</div>
<svg style="left:374px;top:87px" width="11" height="13" viewBox="0 0 11 13" shape-rendering="crispEdges"><g fill="#68748e"><rect x="0" y="0" width="3" height="3"/><rect x="4" y="0" width="3" height="3"/><rect x="8" y="0" width="3" height="3"/></g><g fill="#b0b5c4"><rect x="0" y="4" width="3" height="9"/><rect x="4" y="4" width="3" height="9"/><rect x="8" y="4" width="3" height="9"/></g></svg>
<svg style="left:373px;top:120px" width="13" height="11" viewBox="0 0 13 11" shape-rendering="crispEdges"><g fill="#68748e"><rect x="0" y="0" width="3" height="3"/><rect x="0" y="4" width="3" height="3"/><rect x="0" y="8" width="3" height="3"/></g><g fill="#b0b5c4"><rect x="4" y="0" width="9" height="3"/><rect x="4" y="4" width="9" height="3"/><rect x="4" y="8" width="9" height="3"/></g></svg>
<div class="a" style="left:368px;top:145px;width:1063px;height:226px;background:#fff;box-shadow:1px 1px 0 #cfcfcf"></div>
<div class="t" style="left:404.79px;top:155.69px;font-size:11px;line-height:15px;transform:scaleX(1.0286);color:#3c3c3c;-webkit-text-stroke:.35px #3c3c3c;">SITE_ID</div>
<div class="ln" style="left:372px;top:169px;width:1057px;height:1px"></div>
<div class="ln" style="left:372px;top:329px;width:1057px;height:1px"></div>
<div class="ln" style="left:452px;top:169px;width:1px;height:165px"></div>
<div class="ln" style="left:1428px;top:169px;width:1px;height:161px;background:#dcdcdc"></div>
<div class="t" style="left:440.73px;top:171.69px;font-size:11px;line-height:15px;transform:scaleX(1.0000);font-weight:bold;color:#444;">0</div>
<div class="bar" style="top:172px;width:883px;background:#00602a"></div>
<div class="t" style="left:1340.39px;top:170.69px;font-size:11px;line-height:15px;transform:scaleX(0.9850);color:#0a0a0a;">342,623</div>
<div class="t" style="left:440.72px;top:191.69px;font-size:11px;line-height:15px;transform:scaleX(1.0000);font-weight:bold;color:#444;">2</div>
<div class="bar" style="top:192px;width:7px;background:#b7ceae"></div>
<div class="t" style="left:464.26px;top:190.69px;font-size:11px;line-height:15px;transform:scaleX(0.9850);color:#0a0a0a;">2,912</div>
<div class="t" style="left:440.68px;top:211.69px;font-size:11px;line-height:15px;transform:scaleX(1.0000);font-weight:bold;color:#444;">3</div>
<div class="bar" style="top:212px;width:184px;background:#8ab57a"></div>
<div class="t" style="left:641.24px;top:210.69px;font-size:11px;line-height:15px;transform:scaleX(0.9850);color:#0a0a0a;">71,761</div>
<div class="t" style="left:434.47px;top:231.69px;font-size:11px;line-height:15px;transform:scaleX(1.0000);font-weight:bold;color:#444;">15</div>
<div class="bar" style="top:232px;width:158px;background:#93ba83"></div>
<div class="t" style="left:615.25px;top:230.69px;font-size:11px;line-height:15px;transform:scaleX(0.9850);color:#0a0a0a;">61,582</div>
<div class="t" style="left:434.56px;top:251.69px;font-size:11px;line-height:15px;transform:scaleX(1.0000);font-weight:bold;color:#444;">23</div>
<div class="bar" style="top:252px;width:6px;background:#b7ceae"></div>
<div class="t" style="left:463.26px;top:250.69px;font-size:11px;line-height:15px;transform:scaleX(0.9850);color:#0a0a0a;">2,737</div>
<div class="t" style="left:428.50px;top:271.69px;font-size:11px;line-height:15px;transform:scaleX(1.0000);font-weight:bold;color:#444;">100</div>
<div class="bar" style="top:272px;width:32px;background:#b1caa7"></div>
<div class="t" style="left:488.97px;top:270.69px;font-size:11px;line-height:15px;transform:scaleX(0.9850);color:#0a0a0a;">12,814</div>
<div class="t" style="left:428.35px;top:291.69px;font-size:11px;line-height:15px;transform:scaleX(1.0000);font-weight:bold;color:#444;">101</div>
<div class="bar" style="top:292px;width:14px;background:#b5ccac"></div>
<div class="t" style="left:471.37px;top:290.69px;font-size:11px;line-height:15px;transform:scaleX(0.9850);color:#0a0a0a;">5,948</div>
<div class="t" style="left:428.96px;top:311.69px;font-size:11px;line-height:15px;transform:scaleX(1.0000);font-weight:bold;color:#444;">211</div>
<div class="bar" style="top:312px;width:4px;background:#b8ceaf"></div>
<div class="t" style="left:461.26px;top:310.69px;font-size:11px;line-height:15px;transform:scaleX(0.9850);color:#0a0a0a;">2,127</div>
<div class="ln" style="left:452px;top:330px;width:1px;height:4px"></div>
<div class="t" style="left:453.98px;top:334.69px;font-size:11px;line-height:15px;transform:scaleX(0.9850);color:#555;">0K</div>
<div class="ln" style="left:504px;top:330px;width:1px;height:4px"></div>
<div class="t" style="left:493.85px;top:334.69px;font-size:11px;line-height:15px;transform:scaleX(0.9850);color:#555;">20K</div>
<div class="ln" style="left:555px;top:330px;width:1px;height:4px"></div>
<div class="t" style="left:545.60px;top:334.69px;font-size:11px;line-height:15px;transform:scaleX(0.9850);color:#555;">40K</div>
<div class="ln" style="left:607px;top:330px;width:1px;height:4px"></div>
<div class="t" style="left:597.05px;top:334.69px;font-size:11px;line-height:15px;transform:scaleX(0.9850);color:#555;">60K</div>
<div class="ln" style="left:658px;top:330px;width:1px;height:4px"></div>
<div class="t" style="left:648.69px;top:334.69px;font-size:11px;line-height:15px;transform:scaleX(0.9850);color:#555;">80K</div>
<div class="ln" style="left:710px;top:330px;width:1px;height:4px"></div>
<div class="t" style="left:697.10px;top:334.69px;font-size:11px;line-height:15px;transform:scaleX(0.9850);color:#555;">100K</div>
<div class="ln" style="left:762px;top:330px;width:1px;height:4px"></div>
<div class="t" style="left:748.70px;top:334.69px;font-size:11px;line-height:15px;transform:scaleX(0.9850);color:#555;">120K</div>
<div class="ln" style="left:813px;top:330px;width:1px;height:4px"></div>
<div class="t" style="left:800.30px;top:334.69px;font-size:11px;line-height:15px;transform:scaleX(0.9850);color:#555;">140K</div>
<div class="ln" style="left:865px;top:330px;width:1px;height:4px"></div>
<div class="t" style="left:851.90px;top:334.69px;font-size:11px;line-height:15px;transform:scaleX(0.9850);color:#555;">160K</div>
<div class="ln" style="left:916px;top:330px;width:1px;height:4px"></div>
<div class="t" style="left:903.50px;top:334.69px;font-size:11px;line-height:15px;transform:scaleX(0.9850);color:#555;">180K</div>
<div class="ln" style="left:968px;top:330px;width:1px;height:4px"></div>
<div class="t" style="left:955.24px;top:334.69px;font-size:11px;line-height:15px;transform:scaleX(0.9850);color:#555;">200K</div>
<div class="ln" style="left:1020px;top:330px;width:1px;height:4px"></div>
<div class="t" style="left:1006.84px;top:334.69px;font-size:11px;line-height:15px;transform:scaleX(0.9850);color:#555;">220K</div>
<div class="ln" style="left:1071px;top:330px;width:1px;height:4px"></div>
<div class="t" style="left:1058.44px;top:334.69px;font-size:11px;line-height:15px;transform:scaleX(0.9850);color:#555;">240K</div>
<div class="ln" style="left:1123px;top:330px;width:1px;height:4px"></div>
<div class="t" style="left:1110.04px;top:334.69px;font-size:11px;line-height:15px;transform:scaleX(0.9850);color:#555;">260K</div>
<div class="ln" style="left:1174px;top:330px;width:1px;height:4px"></div>
<div class="t" style="left:1161.64px;top:334.69px;font-size:11px;line-height:15px;transform:scaleX(0.9850);color:#555;">280K</div>
<div class="ln" style="left:1226px;top:330px;width:1px;height:4px"></div>
<div class="t" style="left:1213.30px;top:334.69px;font-size:11px;line-height:15px;transform:scaleX(0.9850);color:#555;">300K</div>
<div class="ln" style="left:1278px;top:330px;width:1px;height:4px"></div>
<div class="t" style="left:1264.90px;top:334.69px;font-size:11px;line-height:15px;transform:scaleX(0.9850);color:#555;">320K</div>
<div class="ln" style="left:1329px;top:330px;width:1px;height:4px"></div>
<div class="t" style="left:1316.50px;top:334.69px;font-size:11px;line-height:15px;transform:scaleX(0.9850);color:#555;">340K</div>
<div class="ln" style="left:1381px;top:330px;width:1px;height:4px"></div>
<div class="t" style="left:1368.10px;top:334.69px;font-size:11px;line-height:15px;transform:scaleX(0.9850);color:#555;">360K</div>
<div class="t" style="left:922.28px;top:350.69px;font-size:11px;line-height:15px;transform:scaleX(1.0235);color:#555;">PRICE</div>
<div class="a" style="left:0;top:808px;width:1440px;height:1px;background:#f6f6f6"></div>
<div class="a" style="left:0;top:809px;width:1440px;height:30px;background:#e6e6e6;border-top:1px solid #b4b4b4"></div>
<div class="a" style="left:130px;top:809px;width:74px;height:30px;background:#fff;border-left:1px solid #5a5a5a;border-right:1px solid #8a8a8a;border-top:1px solid #b4b4b4"></div>
<svg style="left:8px;top:817px" width="12" height="15" viewBox="8 817 12 15"><rect x="8.600" y="817.600" width="9.800" height="13.800" rx="2.600" fill="#fff" stroke="#4a669c" stroke-width="1.200"/><path d="M9 820.600h9" fill="none" stroke="#4a669c" stroke-width="1.100"/></svg>
<div class="t" style="left:23.77px;top:816.84px;font-size:12px;line-height:16px;transform:scaleX(0.9419);color:#5c665e;">Data Source</div>
<div class="t" style="left:136.45px;top:816.84px;font-size:12px;line-height:16px;transform:scaleX(0.9999);font-weight:bold;color:#3a3a3a;">Sheet 1</div>
<svg style="left:210px;top:816px" width="84" height="18" viewBox="210 816 84 18"><g fill="#fff" stroke="#5a6a80" stroke-width="1"><rect x="212.500" y="820.500" width="14" height="10"/><rect x="244.500" y="820.500" width="14" height="10"/><path d="M276.500 820.500l7 1.500 7-1.500v10l-7 1.500-7-1.500z"/></g><g stroke="#5a6a80" fill="none"><path d="M251.500 820.500v10M244.500 825.500h14M283.500 822v10"/><path d="M217 831v-4M221 831v-8M224.500 831v-6" stroke-width="1.600"/></g><g fill="#e6e6e6"><rect x="211" y="817" width="8" height="8"/><rect x="243" y="817" width="8" height="8"/><rect x="275" y="817" width="8" height="8"/></g><path d="M212 821h6M215 818v6" stroke="#3f66c0" stroke-width="2" fill="none"/><path d="M244 821h6M247 818v6" stroke="#3f66c0" stroke-width="2" fill="none"/><path d="M276 821h6M279 818v6" stroke="#3f66c0" stroke-width="2" fill="none"/></svg>
<div class="a" style="left:0;top:839px;width:1440px;height:20px;background:#f7f3f7;border-top:1px solid #8f8f8f"></div>
<div class="t" style="left:3.41px;top:842.84px;font-size:12px;line-height:16px;transform:scaleX(0.9396);">8 marks</div>
<div class="t" style="left:65.08px;top:842.84px;font-size:12px;line-height:16px;transform:scaleX(0.9934);">8 rows by 1 column</div>
<div class="t" style="left:189.51px;top:842.84px;font-size:12px;line-height:16px;transform:scaleX(0.8964);">SUM(PRICE): 502,504</div>
<div class="a" style="left:1073px;top:840px;width:1px;height:19px;background:#c6c2c6"></div>
<div class="a" style="left:1200px;top:840px;width:1px;height:19px;background:#c6c2c6"></div>
<div class="a" style="left:1227px;top:840px;width:1px;height:19px;background:#c6c2c6"></div>
<div class="a" style="left:1254px;top:840px;width:1px;height:19px;background:#c6c2c6"></div>
<div class="a" style="left:1301px;top:840px;width:1px;height:19px;background:#c6c2c6"></div>
<div class="a" style="left:1372px;top:840px;width:1px;height:19px;background:#c6c2c6"></div>
<svg style="left:1305px;top:842px" width="135" height="16" viewBox="1305 842 135 16"><g fill="#ababab"><rect x="1310" y="846" width="1.300" height="7.500"/><path d="M1316 846v7.500l-4.500-3.750z"/><path d="M1331 846v7.500l-4.500-3.750z"/><path d="M1343 846v7.500l4.500-3.750z"/><path d="M1358 846v7.500l4.500-3.750z"/><rect x="1362.700" y="846" width="1.300" height="7.500"/><rect x="1381" y="844" width="3" height="3"/><rect x="1381" y="848" width="3" height="3"/><rect x="1381" y="852" width="3" height="3"/><rect x="1385" y="844" width="3" height="3"/><rect x="1385" y="848" width="3" height="3"/><rect x="1385" y="852" width="3" height="3"/><rect x="1389" y="844" width="3" height="3"/><rect x="1389" y="848" width="3" height="3"/><rect x="1389" y="852" width="3" height="3"/><rect x="1402" y="844" width="11" height="6"/><rect x="1402" y="852" width="3" height="3"/><rect x="1406" y="852" width="3" height="3"/><rect x="1410" y="852" width="3" height="3"/></g><rect x="1423" y="844" width="11" height="11" fill="#4a4c4a"/></svg>
</div></body></html>
